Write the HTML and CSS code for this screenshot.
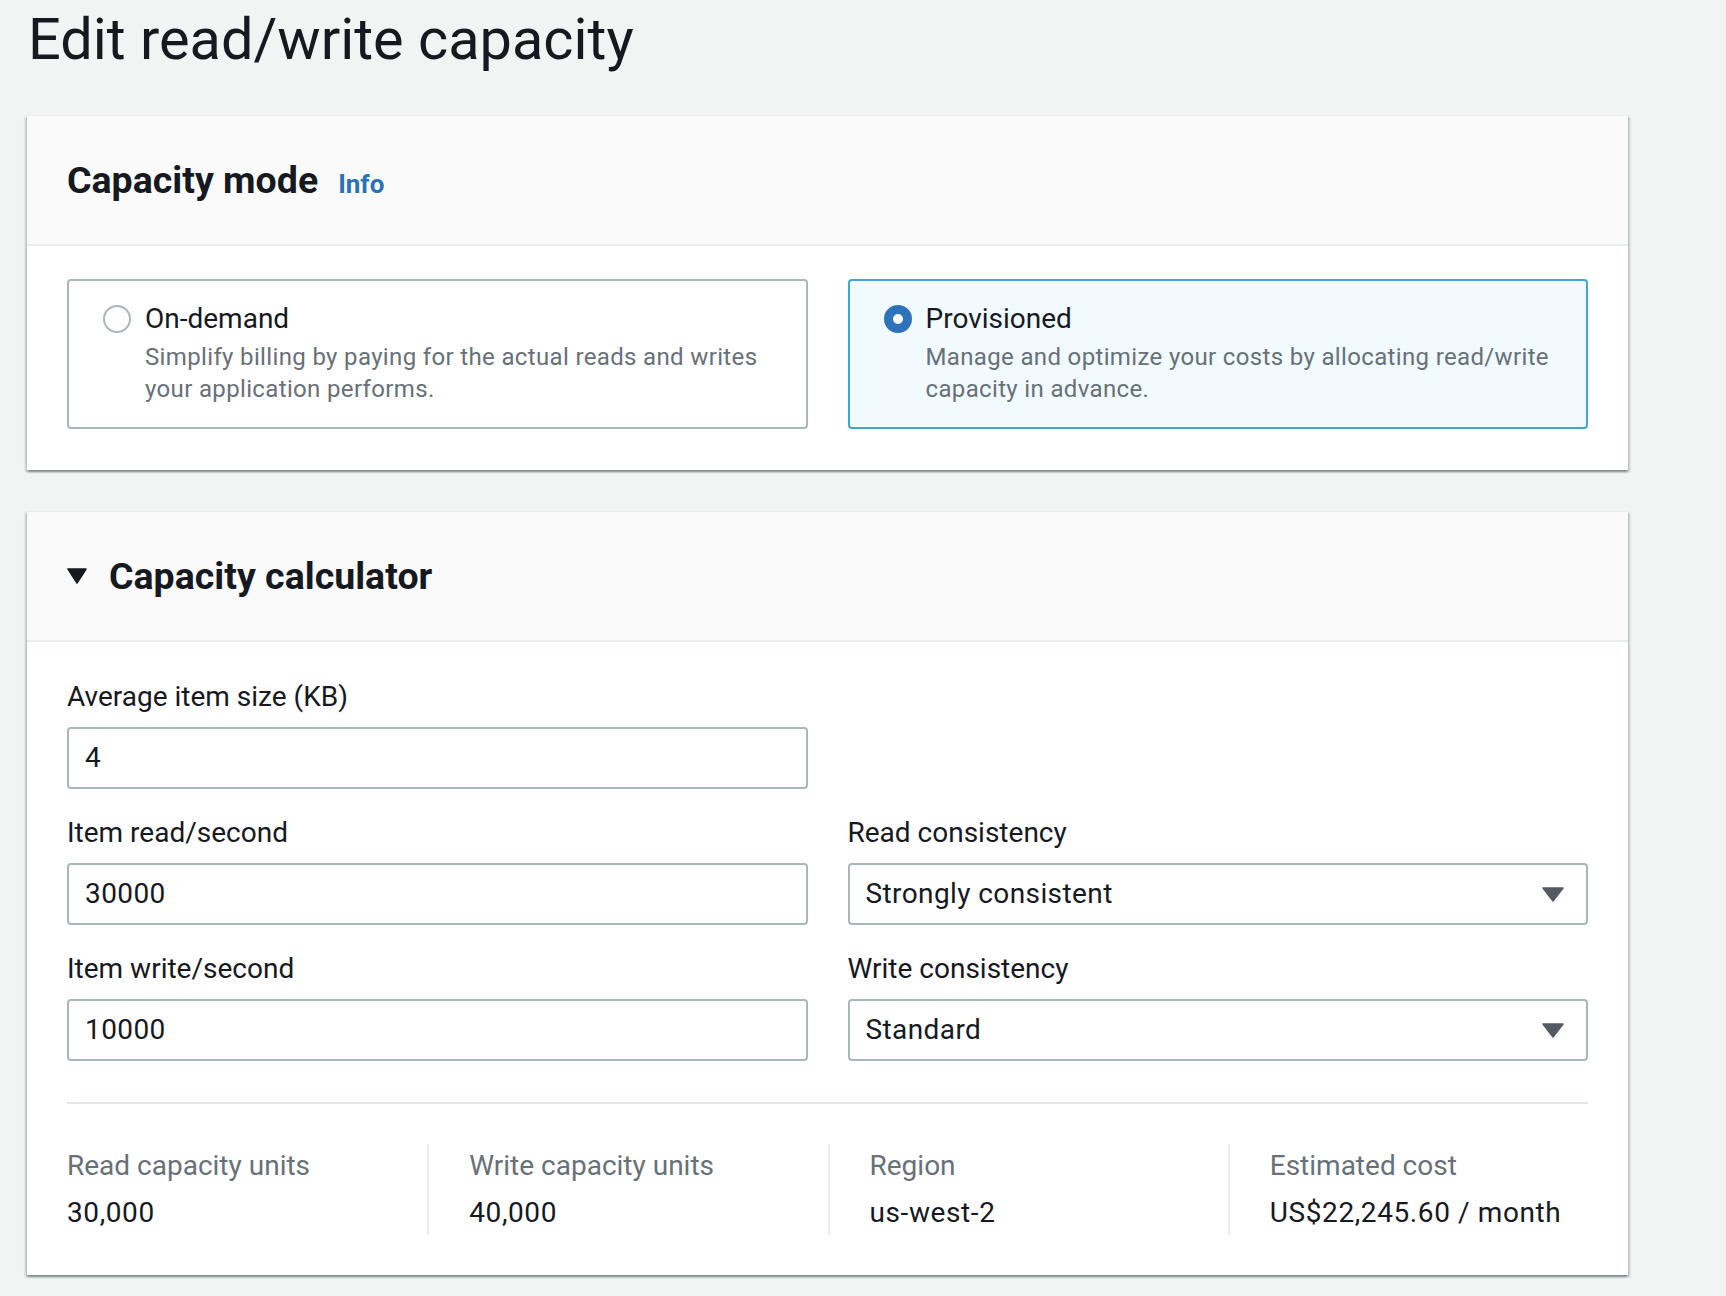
FILE: index.html
```html
<!DOCTYPE html>
<html lang="en">
<head>
<meta charset="utf-8">
<title>Edit read/write capacity</title>
<link rel="stylesheet" href="styles.css">
</head>
<body>
<div class="page">
  <h1 class="page-title">Edit read/write capacity</h1>

  <section class="card">
    <div class="card-header">
      <h2 class="card-title">Capacity mode</h2>
      <a class="info-link">Info</a>
    </div>
    <div class="card-body card-body-mode">
      <div class="tiles">
        <div class="tile">
          <span class="radio"></span>
          <div class="tile-text">
            <div class="tile-label">On-demand</div>
            <div class="tile-desc">Simplify billing by paying for the actual reads and writes<br>your application performs.</div>
          </div>
        </div>
        <div class="tile tile-selected">
          <span class="radio radio-checked"></span>
          <div class="tile-text">
            <div class="tile-label">Provisioned</div>
            <div class="tile-desc">Manage and optimize your costs by allocating read/write<br>capacity in advance.</div>
          </div>
        </div>
      </div>
    </div>
  </section>

  <section class="card">
    <div class="card-header">
      <svg class="caret" width="20" height="16" viewBox="0 0 20 16"><polygon points="1,1 19,1 10,15" fill="#16191f" stroke="#16191f" stroke-width="1.5" stroke-linejoin="round"/></svg>
      <h2 class="card-title">Capacity calculator</h2>
    </div>
    <div class="card-body card-body-calc">
      <div class="fields">
        <div class="field">
          <label class="field-label">Average item size (KB)</label>
          <div class="input">4</div>
        </div>
        <div class="field"></div>
        <div class="field">
          <label class="field-label">Item read/second</label>
          <div class="input">30000</div>
        </div>
        <div class="field">
          <label class="field-label">Read consistency</label>
          <div class="input select">Strongly consistent
            <svg class="select-arrow" width="22" height="15" viewBox="0 0 22 15"><polygon points="1,1 21,1 11,14" fill="#545b64" stroke="#545b64" stroke-width="1.5" stroke-linejoin="round"/></svg>
          </div>
        </div>
        <div class="field">
          <label class="field-label">Item write/second</label>
          <div class="input">10000</div>
        </div>
        <div class="field">
          <label class="field-label">Write consistency</label>
          <div class="input select">Standard
            <svg class="select-arrow" width="22" height="15" viewBox="0 0 22 15"><polygon points="1,1 21,1 11,14" fill="#545b64" stroke="#545b64" stroke-width="1.5" stroke-linejoin="round"/></svg>
          </div>
        </div>
      </div>
      <hr class="divider">
      <div class="stats">
        <div class="stat">
          <div class="stat-label">Read capacity units</div>
          <div class="stat-value">30,000</div>
        </div>
        <div class="stat">
          <div class="stat-label">Write capacity units</div>
          <div class="stat-value">40,000</div>
        </div>
        <div class="stat">
          <div class="stat-label">Region</div>
          <div class="stat-value">us-west-2</div>
        </div>
        <div class="stat">
          <div class="stat-label">Estimated cost</div>
          <div class="stat-value">US$22,245.60 / month</div>
        </div>
      </div>
    </div>
  </section>
</div>
</body>
</html>
```

FILE: styles.css
```css
html, body {
  margin: 0;
  padding: 0;
  background: #f2f3f3;
}

body {
  font-family: Roboto, "Liberation Sans", Arial, sans-serif;
  color: #16191f;
  font-size: 28px;
  line-height: 44px;
}

.page {
  padding: 3px 98px 16px 27px;
}

.page-title {
  margin: 0 0 40px 0;
  font-size: 57.7px;
  line-height: 72px;
  font-weight: 400;
  color: #16191f;
  padding-left: 1px;
}

.card {
  background: #ffffff;
  border-top: 1px solid #eaeded;
  box-shadow: 0 2px 2px 0 rgba(0, 28, 36, 0.3),
              2px 2px 2px 0 rgba(0, 28, 36, 0.15),
              -2px 2px 2px 0 rgba(0, 28, 36, 0.15);
}

.card + .card {
  margin-top: 41px;
}

.card-header {
  display: flex;
  align-items: baseline;
  background: #fafafa;
  border-bottom: 2px solid #eaeded;
  padding: 42px 40px 42px 40px;
}

.card-title {
  margin: 0;
  font-size: 37.5px;
  line-height: 44px;
  font-weight: 700;
  color: #16191f;
}

.info-link {
  margin-left: 20px;
  font-size: 26px;
  line-height: 24px;
  font-weight: 700;
  color: #2a72b8;
}

.caret {
  align-self: center;
  margin-right: 22px;
  flex: none;
}

.card-body-mode {
  padding: 33px 40px 41px 40px;
}

.tiles {
  display: grid;
  grid-template-columns: 1fr 1fr;
  column-gap: 40px;
}

.tile {
  display: flex;
  gap: 14px;
  border: 2px solid #aab7b8;
  border-radius: 4px;
  padding: 16px 20px 22px 34px;
  background: #ffffff;
}

.tile-selected {
  border-color: #44a6cf;
  background: #f1faff;
}

.radio {
  flex: none;
  box-sizing: border-box;
  width: 28px;
  height: 28px;
  margin-top: 8px;
  border: 2px solid #aab7b8;
  border-radius: 50%;
  background: #ffffff;
}

.radio-checked {
  border: 9px solid #2d73b9;
  background: #ffffff;
}

.tile-label {
  font-size: 28px;
  line-height: 44px;
  color: #16191f;
}

.tile-desc {
  font-size: 24px;
  line-height: 32px;
  letter-spacing: 0.35px;
  color: #687078;
}

.card-body-calc {
  padding: 33px 40px 40px 40px;
}

.fields {
  display: grid;
  grid-template-columns: 1fr 1fr;
  column-gap: 40px;
  row-gap: 22px;
}

.field-label {
  display: block;
  font-size: 28px;
  line-height: 44px;
  margin-bottom: 8px;
  color: #16191f;
}

.input {
  position: relative;
  box-sizing: border-box;
  height: 62px;
  border: 2px solid #aab7b8;
  border-radius: 4px;
  padding: 0 16px;
  font-size: 28px;
  line-height: 58px;
  letter-spacing: 0.4px;
  color: #16191f;
  background: #ffffff;
}

.select-arrow {
  position: absolute;
  right: 22px;
  top: 22px;
}

.divider {
  margin: 41px 0 40px 0;
  border: none;
  height: 2px;
  background: #e3e6e6;
}

.stats {
  display: grid;
  grid-template-columns: repeat(4, 1fr);
  margin: 0 -40px;
}

.stat {
  padding: 0 40px;
}

.stat + .stat {
  border-left: 2px solid #eaeded;
}

.stat-label {
  font-size: 28px;
  line-height: 44px;
  color: #687078;
}

.stat-value {
  margin-top: 3px;
  font-size: 28px;
  line-height: 44px;
  letter-spacing: 0.6px;
  color: #16191f;
}
```
